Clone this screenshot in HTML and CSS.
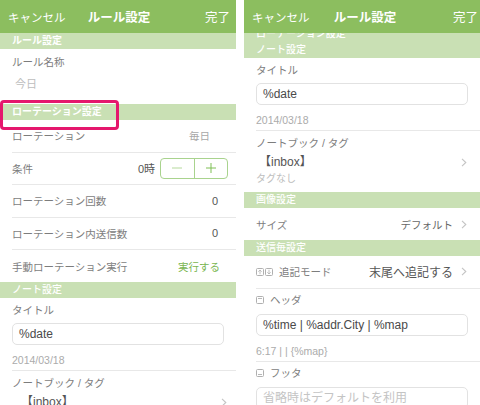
FILE: index.html
```html
<!DOCTYPE html>
<html lang="ja">
<head>
<meta charset="utf-8">
<title>ルール設定</title>
<link rel="stylesheet" href="styles.css">
</head>
<body>
<div class="screens">
  <section class="phone">
    <header class="nav">
      <span class="nav-btn">キャンセル</span>
      <span class="nav-title">ルール設定</span>
      <span class="nav-btn nav-done">完了</span>
    </header>
    <div class="viewport">
      <div class="sec sec-strong">ルール設定</div>
      <div class="name-block">
        <div class="label">ルール名称</div>
        <div class="placeholder">今日</div>
      </div>
      <div class="sec sec-strong sec-marked"><span class="mark">ローテーション設定</span></div>
      <div class="row"><span class="label">ローテーション</span><span class="value light">毎日</span></div>
      <div class="row">
        <span class="label">条件</span>
        <span class="stepper-wrap">
          <span class="value dark">0時</span>
          <span class="stepper">
            <span class="step"><svg width="10" height="10" viewBox="0 0 10 10"><line x1="0" y1="5" x2="10" y2="5" stroke="#b5d99c" stroke-width="1"/></svg></span>
            <span class="step"><svg width="10" height="10" viewBox="0 0 10 10"><line x1="0" y1="5" x2="10" y2="5" stroke="#7fbf55" stroke-width="1"/><line x1="5" y1="0" x2="5" y2="10" stroke="#7fbf55" stroke-width="1"/></svg></span>
          </span>
        </span>
      </div>
      <div class="row"><span class="label">ローテーション回数</span><span class="value dark num">0</span></div>
      <div class="row"><span class="label">ローテーション内送信数</span><span class="value dark num">0</span></div>
      <div class="row row-last"><span class="label">手動ローテーション実行</span><span class="value green">実行する</span></div>
      <div class="sec">ノート設定</div>
      <div class="field">
        <div class="label">タイトル</div>
        <div class="input">%date</div>
        <div class="hint">2014/03/18</div>
      </div>
      <div class="nb nb-left">
        <div class="label">ノートブック / タグ</div>
        <div class="nb-main">
          <span class="inbox">【inbox】</span>
          <svg class="chev" width="6" height="9" viewBox="0 0 6 9"><polyline points="1,0.8 4.8,4.5 1,8.2" fill="none" stroke="#c4c4c4" stroke-width="1.1"/></svg>
        </div>
      </div>
    </div>
  </section>

  <section class="phone">
    <header class="nav nav-right">
      <span class="nav-btn">キャンセル</span>
      <span class="nav-title">ルール設定</span>
      <span class="nav-btn nav-done">完了</span>
    </header>
    <div class="viewport">
      <div class="sec sec-pushed">ローテーション設定</div>
      <div class="sec">ノート設定</div>
      <div class="field">
        <div class="label">タイトル</div>
        <div class="input">%date</div>
        <div class="hint">2014/03/18</div>
      </div>
      <div class="nb">
        <div class="label">ノートブック / タグ</div>
        <div class="nb-main">
          <span class="inbox">【inbox】</span>
          <svg class="chev" width="6" height="9" viewBox="0 0 6 9"><polyline points="1,0.8 4.8,4.5 1,8.2" fill="none" stroke="#c4c4c4" stroke-width="1.1"/></svg>
        </div>
        <div class="tags">タグなし</div>
      </div>
      <div class="sec">画像設定</div>
      <div class="row row-r row-last">
        <span class="label">サイズ</span>
        <span class="value-chev"><span class="value mid">デフォルト</span><svg class="chev" width="6" height="9" viewBox="0 0 6 9"><polyline points="1,0.8 4.8,4.5 1,8.2" fill="none" stroke="#c4c4c4" stroke-width="1.1"/></svg></span>
      </div>
      <div class="sec">送信毎設定</div>
      <div class="row row-r">
        <span class="label icon-label">
          <svg class="ico" width="17" height="8" viewBox="0 0 17 8">
            <rect x="0.5" y="0.5" width="7" height="7" rx="1" fill="none" stroke="#b0b0b0"/>
            <polyline points="2.3,3.7 4,2 5.7,3.7" fill="none" stroke="#b0b0b0" stroke-width="0.8"/>
            <line x1="4" y1="2" x2="4" y2="6.2" stroke="#b0b0b0" stroke-width="0.8"/>
            <rect x="9.5" y="0.5" width="7" height="7" rx="1" fill="none" stroke="#b0b0b0"/>
            <polyline points="11.3,4.3 13,6 14.7,4.3" fill="none" stroke="#b0b0b0" stroke-width="0.8"/>
            <line x1="13" y1="1.8" x2="13" y2="6" stroke="#b0b0b0" stroke-width="0.8"/>
          </svg>追記モード</span>
        <span class="value-chev"><span class="value big">末尾へ追記する</span><svg class="chev" width="6" height="9" viewBox="0 0 6 9"><polyline points="1,0.8 4.8,4.5 1,8.2" fill="none" stroke="#c4c4c4" stroke-width="1.1"/></svg></span>
      </div>
      <div class="field field-icon">
        <div class="label icon-label">
          <svg class="ico" width="8" height="8" viewBox="0 0 8 8">
            <rect x="0.5" y="0.5" width="7" height="7" rx="1" fill="none" stroke="#b0b0b0"/>
            <line x1="2" y1="2.5" x2="6" y2="2.5" stroke="#b0b0b0" stroke-width="0.9"/>
          </svg>ヘッダ</div>
        <div class="input">%time | %addr.City | %map</div>
        <div class="hint">6:17 | | {%map}</div>
      </div>
      <div class="field field-icon">
        <div class="label icon-label">
          <svg class="ico" width="8" height="8" viewBox="0 0 8 8">
            <rect x="0.5" y="0.5" width="7" height="7" rx="1" fill="none" stroke="#b0b0b0"/>
            <line x1="2" y1="5.5" x2="6" y2="5.5" stroke="#b0b0b0" stroke-width="0.9"/>
          </svg>フッタ</div>
        <div class="input input-ph">省略時はデフォルトを利用</div>
      </div>
    </div>
  </section>
</div>
</body>
</html>
```

FILE: styles.css
```css
* {
  box-sizing: border-box;
  margin: 0;
  padding: 0;
}

body {
  margin: 0;
  background: #ffffff;
  font-family: "Liberation Sans", "Noto Sans CJK JP", sans-serif;
  color: #7a7a7a;
}

.screens {
  display: flex;
  gap: 8px;
  width: 480px;
  height: 405px;
  overflow: hidden;
}

.phone {
  width: 236px;
  height: 405px;
  flex: none;
  display: flex;
  flex-direction: column;
  overflow: hidden;
  background: #ffffff;
}

.nav {
  height: 33px;
  flex: none;
  background: #8cbe5f;
  color: #ffffff;
  display: grid;
  grid-template-columns: 1fr auto 1fr;
  align-items: center;
  padding: 0 6px 0 8px;
}

.nav-right {
  padding-right: 2px;
}

.nav-btn {
  font-size: 11.5px;
  white-space: nowrap;
}

.nav-title {
  font-size: 12.5px;
  font-weight: bold;
}

.nav-done {
  text-align: right;
  font-size: 12.5px;
}

.viewport {
  flex: 1;
  overflow: hidden;
}

.sec {
  height: 16px;
  background: #c9e0b4;
  color: #ffffff;
  font-size: 10px;
  font-weight: 500;
  line-height: 16px;
  padding-left: 12px;
  white-space: nowrap;
}

.sec-strong {
  font-weight: bold;
}

.sec-pushed {
  margin-top: -7px;
}

.sec-marked {
  position: relative;
}

.mark::after {
  content: "";
  position: absolute;
  left: 0;
  top: -4px;
  width: 113px;
  height: 24px;
  border: 3px solid #e5176d;
  border-radius: 4px;
}

.label {
  font-size: 10.5px;
  color: #7d7d7d;
  white-space: nowrap;
}

.name-block {
  padding: 5px 0 12px 12px;
  height: 55px;
}

.name-block .label {
  line-height: 16px;
}

.placeholder {
  margin-top: 6px;
  padding-left: 3px;
  font-size: 11px;
  line-height: 16px;
  color: #bdbdbd;
}

.row {
  height: 32.5px;
  margin-left: 12px;
  padding-right: 8px;
  display: flex;
  align-items: center;
  justify-content: space-between;
  border-bottom: 1px solid #e8e8e8;
}

.row-last {
  border-bottom: none;
  height: 32px;
}

.row-r {
  padding-right: 13px;
}

.value {
  font-size: 10.5px;
  white-space: nowrap;
}

.value.light {
  color: #a8a8a8;
  margin-right: 18px;
}

.value.dark {
  color: #555555;
}

.value.num {
  font-size: 11px;
  margin-right: 10px;
}

.value.green {
  color: #79b54f;
  margin-right: 8px;
  font-size: 10.5px;
}

.value.mid {
  color: #666666;
  font-size: 10.5px;
}

.value.big {
  color: #555555;
  font-size: 12px;
}

.stepper-wrap {
  display: flex;
  align-items: center;
  gap: 5px;
}

.stepper-wrap .value {
  font-size: 11px;
}

.stepper {
  display: flex;
  width: 68px;
  height: 21px;
  border: 1px solid #a9d38e;
  border-radius: 4px;
}

.step {
  flex: 1;
  display: flex;
  align-items: center;
  justify-content: center;
}

.step + .step {
  border-left: 1px solid #a9d38e;
}

.value-chev {
  display: flex;
  align-items: center;
  gap: 8px;
}

.chev {
  display: block;
  flex: none;
}

.field {
  margin-left: 12px;
  padding: 4px 12px 2px 0;
  border-bottom: 1px solid #e8e8e8;
}

.field .label {
  line-height: 16px;
}

.input {
  margin-top: 5px;
  height: 22px;
  border: 1px solid #e2e2e2;
  border-radius: 5px;
  padding: 0 6px;
  font-size: 12px;
  line-height: 20px;
  color: #4a4a4a;
  white-space: nowrap;
  overflow: hidden;
}

.input-ph {
  color: #c4c4c4;
}

.hint {
  margin-top: 7px;
  font-size: 10.5px;
  line-height: 16px;
  color: #ababab;
  white-space: nowrap;
}

.field-icon {
  padding-top: 3px;
}

.field-icon .input {
  margin-top: 6px;
}

.icon-label {
  display: flex;
  align-items: center;
}

.ico {
  display: block;
  margin-right: 6px;
  flex: none;
}

.nb {
  margin-left: 12px;
  padding: 4px 13px 5px 0;
}

.nb-left {
  padding-right: 9px;
}

.nb .label {
  line-height: 16px;
}

.nb-main {
  display: flex;
  align-items: center;
  justify-content: space-between;
  margin-top: 2px;
}

.inbox {
  font-size: 12px;
  line-height: 18px;
  color: #555555;
  padding-left: 3px;
}

.nb-left .inbox {
  padding-left: 9px;
}

.tags {
  font-size: 10px;
  line-height: 16px;
  color: #bdbdbd;
}
```
